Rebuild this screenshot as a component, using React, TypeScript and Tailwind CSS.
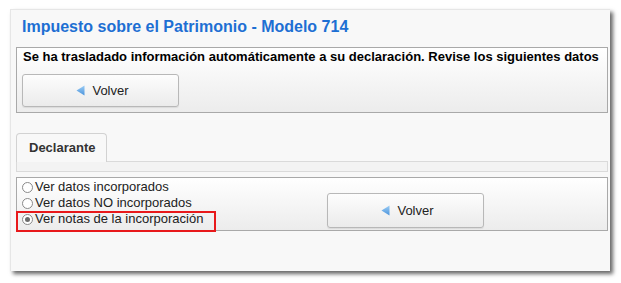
import React from 'react';

const Triangle: React.FC = () => (
  <svg width="9" height="11" viewBox="0 0 9 11" className="shrink-0">
    <defs>
      <linearGradient id="tri" x1="0" y1="0" x2="0" y2="1">
        <stop offset="0" stopColor="#9ccdf5" />
        <stop offset="1" stopColor="#4a93dc" />
      </linearGradient>
    </defs>
    <path d="M8.5 0.5 L0.5 5.5 L8.5 10.5 Z" fill="url(#tri)" />
  </svg>
);

const VolverButton: React.FC<{ className?: string }> = ({ className }) => (
  <button
    className={`w-[157px] flex items-center justify-center gap-[7px] pl-[4px] border border-[#b8b8b8] rounded-[3px] bg-gradient-to-b from-[#fdfdfd] to-[#ebebeb] text-[13px] text-[#222] shadow-[0_1px_1px_rgba(0,0,0,0.08)] ${className ?? ''}`}
  >
    <Triangle />
    <span>Volver</span>
  </button>
);

const Radio: React.FC<{ label: string; checked?: boolean }> = ({ label, checked }) => (
  <label className="flex items-center h-[16px] gap-[2px] text-[13px] leading-[16px] text-[#222]">
    <span className="w-[11px] h-[11px] rounded-full border border-[#8a8a8a] bg-white flex items-center justify-center shrink-0">
      {checked && <span className="w-[5px] h-[5px] rounded-full bg-[#6b6b6b]" />}
    </span>
    <span>{label}</span>
  </label>
);

export default function App() {
  return (
    <div className="w-[621px] h-[283px] bg-white pt-[9px] pl-[10px] font-['Liberation_Sans',Arial,sans-serif]">
      <div className="w-[600px] h-[262px] bg-[#f8f8f8] border-t border-l border-[#e6e6e6] shadow-[3px_3px_4px_rgba(0,0,0,0.6)]">
        <h1 className="pl-[11px] pt-[8px] h-[37px] text-[16px] leading-[18px] font-bold text-[#1d6fd3]">
          Impuesto sobre el Patrimonio - Modelo 714
        </h1>

        <div className="ml-[5px] w-[592px] h-[66px] border border-[#a9a9a9] bg-gradient-to-b from-white to-[#ececec] pt-[1px]">
          <p className="pl-[6px] text-[13px] leading-[15px] font-bold text-black">
            Se ha trasladado información automáticamente a su declaración. Revise los siguientes datos
          </p>
          <VolverButton className="ml-[5px] mt-[10px] h-[33px]" />
        </div>

        <div className="ml-[5px] mt-[20px] w-[592px]">
          <div className="flex items-end">
            <div className="w-[91px] h-[29px] border border-b-0 border-[#d2d2d2] rounded-t-[4px] bg-[#f8f8f8] pl-[12px] pt-[6px] text-[13px] leading-[15px] font-bold text-[#333]">
              Declarante
            </div>
            <div className="flex-1 border-b border-[#dadada]" />
          </div>
          <div className="h-[10px] border border-t-0 border-[#dadada] bg-[#f3f3f3]" />
        </div>

        <div className="relative ml-[5px] mt-[5px] w-[592px] h-[54px] border border-[#a9a9a9] bg-gradient-to-b from-white to-[#ececec] flex">
          <div className="pl-[5px] pt-[1px] w-[310px]">
            <Radio label="Ver datos incorporados" />
            <Radio label="Ver datos NO incorporados" />
            <Radio label="Ver notas de la incorporación" checked />
          </div>
          <VolverButton className="mt-[15px] h-[35px]" />
          <div className="absolute left-[-1px] top-[33px] w-[200px] h-[21px] border-2 border-[#e8191b]" />
        </div>
      </div>
    </div>
  );
}
